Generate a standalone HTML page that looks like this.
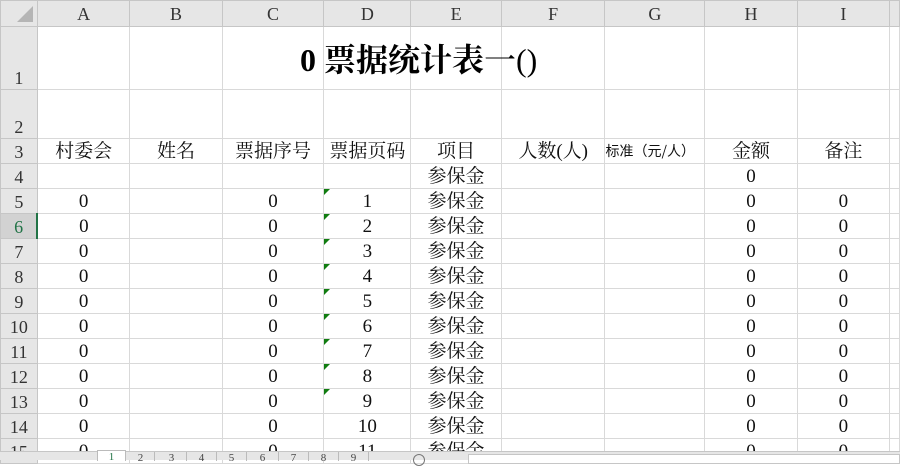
<!DOCTYPE html>
<html><head><meta charset="utf-8"><style>
*{margin:0;padding:0;box-sizing:border-box}
body{width:900px;height:460px;overflow:hidden;background:#fff;position:relative;font-family:"Liberation Serif","Noto Serif CJK SC",serif;}
table{border-collapse:collapse;table-layout:fixed;position:absolute;left:0;top:0}
td{border:1px solid #d9d9d9;text-align:center;font-size:19px;color:#111;white-space:nowrap;overflow:visible;padding:0;position:relative;vertical-align:bottom;line-height:22px}
tr.h td{background:#e6e6e6;border-color:#c6c6c6;font-size:18px;color:#333;vertical-align:middle}
td.rh{background:#e6e6e6;border-color:#c6c6c6;font-size:18px;color:#333;text-align:center}
td.act{background:#d2d2d2;color:#217346;border-right:2px solid #217346}
.tri{position:absolute;left:0;top:0;width:0;height:0;border-top:6px solid #107c10;border-right:6px solid transparent}
.tabs{position:absolute;left:0;top:451px;width:900px;height:9px;background:#e6e6e6;border-top:1px solid #c6c6c6}
.tab{position:absolute;top:0;height:9px;font-size:11px;color:#444;border-right:1px solid #bbb;width:28px;text-align:center;line-height:12px}
.title{position:absolute;left:300px;top:42px;font-size:32px;line-height:36px;white-space:nowrap;color:#000}
</style></head><body>
<table>
<colgroup><col style="width:37px"><col style="width:93px"><col style="width:93px"><col style="width:102px"><col style="width:87px"><col style="width:91px"><col style="width:104px"><col style="width:100px"><col style="width:93px"><col style="width:93px"><col style="width:10px"></colgroup>
<tr class="h" style="height:26px"><td style="position:relative"><div style="position:absolute;right:4px;bottom:4px;border-left:16px solid transparent;border-bottom:16px solid #b5b5b5"></div></td><td>A</td><td>B</td><td>C</td><td>D</td><td>E</td><td>F</td><td>G</td><td>H</td><td>I</td><td></td></tr>
<tr style="height:63px"><td class="rh">1</td><td></td><td></td><td></td><td></td><td></td><td></td><td></td><td></td><td></td><td></td></tr>
<tr style="height:49px"><td class="rh">2</td><td></td><td></td><td></td><td></td><td></td><td></td><td></td><td></td><td></td><td></td></tr>
<tr style="height:25px"><td class="rh">3</td><td>村委会</td><td>姓名</td><td>票据序号</td><td>票据页码</td><td>项目</td><td>人数(人)</td><td style="font-size:14px;text-align:left;vertical-align:middle;font-family:'Noto Sans CJK SC',sans-serif">标准（元/人）</td><td>金额</td><td>备注</td><td></td></tr>
<tr style="height:25px"><td class="rh">4</td><td></td><td></td><td></td><td></td><td>参保金</td><td></td><td></td><td>0</td><td></td><td></td></tr>
<tr style="height:25px"><td class="rh">5</td><td>0</td><td></td><td>0</td><td><div class="tri"></div>1</td><td>参保金</td><td></td><td></td><td>0</td><td>0</td><td></td></tr>
<tr style="height:25px"><td class="rh act">6</td><td>0</td><td></td><td>0</td><td><div class="tri"></div>2</td><td>参保金</td><td></td><td></td><td>0</td><td>0</td><td></td></tr>
<tr style="height:25px"><td class="rh">7</td><td>0</td><td></td><td>0</td><td><div class="tri"></div>3</td><td>参保金</td><td></td><td></td><td>0</td><td>0</td><td></td></tr>
<tr style="height:25px"><td class="rh">8</td><td>0</td><td></td><td>0</td><td><div class="tri"></div>4</td><td>参保金</td><td></td><td></td><td>0</td><td>0</td><td></td></tr>
<tr style="height:25px"><td class="rh">9</td><td>0</td><td></td><td>0</td><td><div class="tri"></div>5</td><td>参保金</td><td></td><td></td><td>0</td><td>0</td><td></td></tr>
<tr style="height:25px"><td class="rh">10</td><td>0</td><td></td><td>0</td><td><div class="tri"></div>6</td><td>参保金</td><td></td><td></td><td>0</td><td>0</td><td></td></tr>
<tr style="height:25px"><td class="rh">11</td><td>0</td><td></td><td>0</td><td><div class="tri"></div>7</td><td>参保金</td><td></td><td></td><td>0</td><td>0</td><td></td></tr>
<tr style="height:25px"><td class="rh">12</td><td>0</td><td></td><td>0</td><td><div class="tri"></div>8</td><td>参保金</td><td></td><td></td><td>0</td><td>0</td><td></td></tr>
<tr style="height:25px"><td class="rh">13</td><td>0</td><td></td><td>0</td><td><div class="tri"></div>9</td><td>参保金</td><td></td><td></td><td>0</td><td>0</td><td></td></tr>
<tr style="height:25px"><td class="rh">14</td><td>0</td><td></td><td>0</td><td>10</td><td>参保金</td><td></td><td></td><td>0</td><td>0</td><td></td></tr>
<tr style="height:25px"><td class="rh">15</td><td>0</td><td></td><td>0</td><td>11</td><td>参保金</td><td></td><td></td><td>0</td><td>0</td><td></td></tr>
</table>
<div class="title"><b>0 票据统计表</b>一()</div>
<div class="tabs">
<div style="position:absolute;left:97px;top:-2px;width:29px;height:11px;background:#fff;border:1px solid #bbb;border-bottom:none;font-size:11px;text-align:center;color:#217346">1</div>
<div class="tab" style="left:127px">2</div><div class="tab" style="left:157px;width:30px">3</div><div class="tab" style="left:187px;width:30px">4</div><div class="tab" style="left:217px;width:30px">5</div><div class="tab" style="left:247px;width:32px">6</div><div class="tab" style="left:279px;width:30px">7</div><div class="tab" style="left:309px;width:30px">8</div><div class="tab" style="left:339px;width:30px">9</div>
<div style="position:absolute;left:413px;top:2px;width:12px;height:12px;border:1px solid #777;border-radius:50%"></div>
<div style="position:absolute;left:468px;top:2px;width:432px;height:10px;background:#fff;border:1px solid #c6c6c6"></div>
</div>
</body></html>
